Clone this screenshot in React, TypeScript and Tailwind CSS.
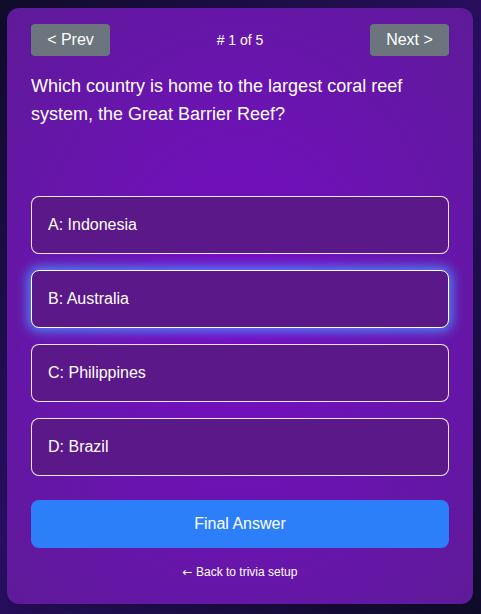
import React from "react";

const answers = [
  { key: "A", text: "Indonesia" },
  { key: "B", text: "Australia" },
  { key: "C", text: "Philippines" },
  { key: "D", text: "Brazil" },
];

const App = () => {
  const selected = "B";

  return (
    <div
      className="min-h-screen py-2 pl-[7px] pr-2 bg-[linear-gradient(135deg,#0f0c29_0%,#2a0f63_50%,#0f0c29_100%)]"
      style={{ fontFamily: '"Liberation Sans", Arial, sans-serif' }}
    >
      {/* Quiz card */}
      <div className="rounded-xl px-6 pt-4 pb-6 text-white bg-[radial-gradient(ellipse_at_center,#780cc4_0%,#6a14b0_50%,#5e1a98_100%)] shadow-lg">
        {/* Top bar */}
        <div className="flex items-center justify-between">
          <button className="w-[79px] h-8 rounded bg-[#6c757d] text-base text-white">
            &lt; Prev
          </button>
          <div className="text-sm">#&nbsp;1 of 5</div>
          <button className="w-[79px] h-8 rounded bg-[#6c757d] text-base text-white">
            Next &gt;
          </button>
        </div>

        {/* Question */}
        <div className="mt-4 min-h-[108px] text-lg leading-7">
          Which country is home to the largest coral reef system, the Great
          Barrier Reef?
        </div>

        {/* Answers */}
        <div className="mt-4 flex flex-col gap-4">
          {answers.map((a) => (
            <button
              key={a.key}
              className={
                a.key === selected
                  ? "h-[58px] w-full rounded-lg border border-white bg-[#5a1889] px-4 text-left text-base shadow-[0_0_12px_3px_#4a8cff]"
                  : "h-[58px] w-full rounded-lg border border-white/90 bg-[#5a1889] px-4 text-left text-base"
              }
            >
              {a.key}: {a.text}
            </button>
          ))}
        </div>

        {/* Final answer */}
        <button className="mt-6 h-12 w-full rounded-lg bg-[#2d7ff9] text-base text-white">
          Final Answer
        </button>

        <div className="mt-4 text-center text-xs leading-4">
          <span style={{ fontFamily: '"DejaVu Sans", sans-serif' }}>←</span> Back to trivia setup
        </div>
      </div>
    </div>
  );
};

export default App;
